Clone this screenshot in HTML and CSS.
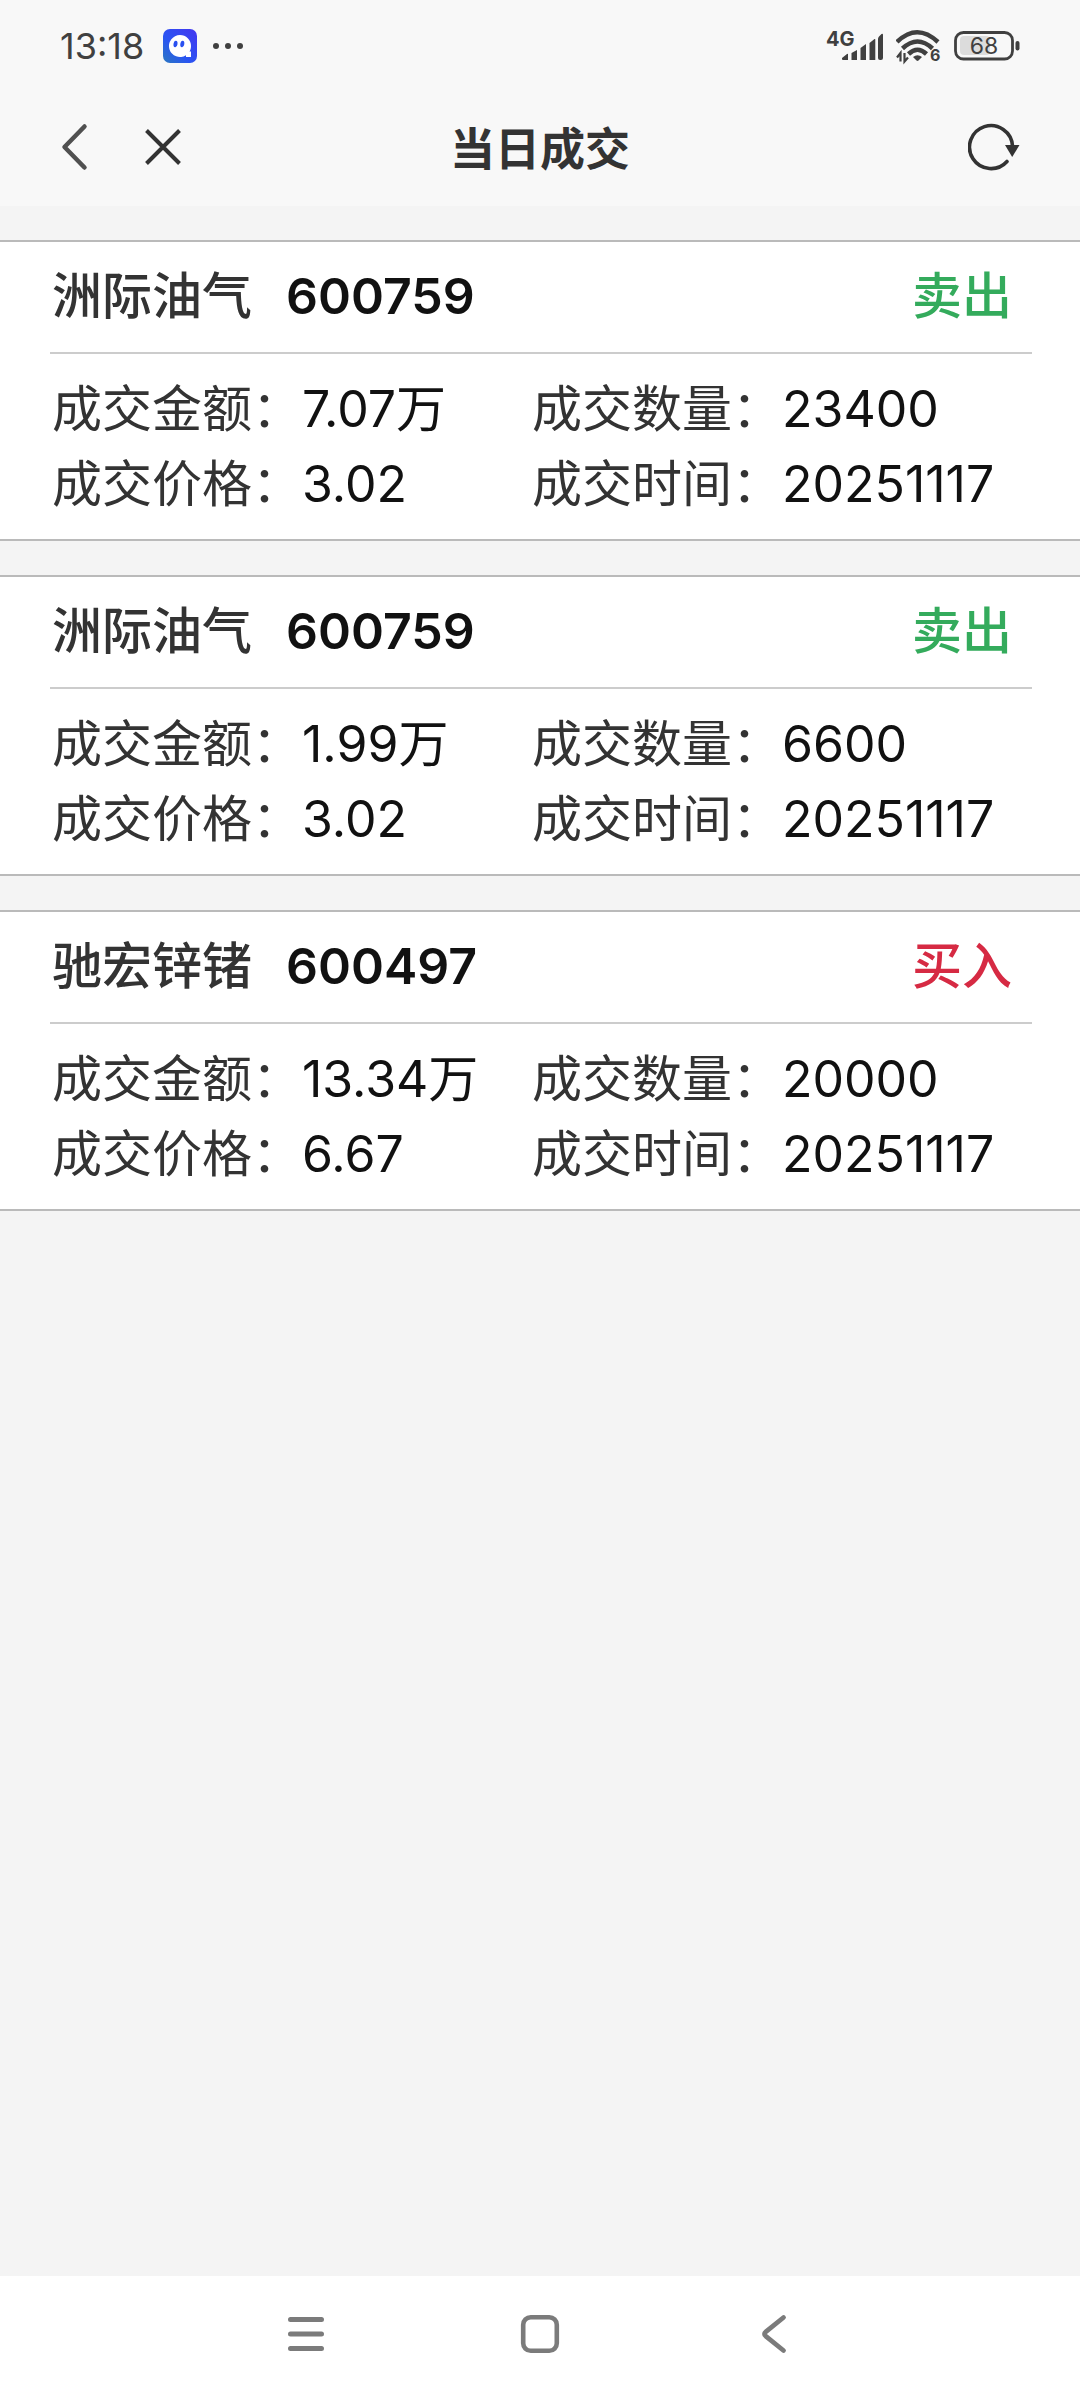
FILE: index.html
```html
<!DOCTYPE html>
<html lang="zh-CN">
<head>
<meta charset="utf-8">
<meta name="viewport" content="width=device-width, initial-scale=1">
<title>当日成交</title>
<link rel="stylesheet" href="styles.css">
</head>
<body>
<div class="status">
  <div class="status-group">
    <span class="clock">13:18</span>
    <svg class="app-icon" width="34" height="34" viewBox="0 0 34 34" aria-hidden="true">
      <defs>
        <linearGradient id="app-bg" x1="0" y1="1" x2="1" y2="0">
          <stop offset="0" stop-color="#2b78c0"/>
          <stop offset=".4" stop-color="#2a55f2"/>
          <stop offset="1" stop-color="#4436f0"/>
        </linearGradient>
      </defs>
      <rect width="34" height="34" rx="7" fill="url(#app-bg)"/>
      <path d="M17 6a11 11 0 0 1 11 11c0 2-.5 4-1.500 5.500H28V28h-5v-1.800A11 11 0 1 1 17 6z" fill="#fff"/>
      <ellipse cx="12.500" cy="15" rx="2" ry="3.200" fill="#2a50f0" transform="rotate(8 12.500 15)"/>
      <ellipse cx="19.300" cy="15" rx="2" ry="3.200" fill="#2a50f0" transform="rotate(8 19.300 15)"/>
    </svg>
    <svg width="30" height="6" viewBox="0 0 30 6" aria-hidden="true" fill="#404040"><circle cx="3" cy="3" r="3"/><circle cx="15" cy="3" r="3"/><circle cx="27" cy="3" r="3"/></svg>
  </div>
  <div class="status-group status-right">
    <svg width="58" height="46" viewBox="0 -6 58 46" aria-label="4G" fill="#404040">
      <text x="0" y="17" class="net">4G</text>
      <path d="M16 29l5-4q1-.6 1 .5V31h-5q-1 0-1-1zM25.500 24l5.500-3v10h-5.500zM34.500 19l5.500-4v16h-5.500zM43.500 14l5-4q.8-.4.800.5V31h-5.800zM52 10q0-1.500 1-2.500l2.500-2.500q1.500-1 1.500 1V29q0 2-2 2h-1q-2 0-2-2z"/>
    </svg>
    <svg width="46" height="46" viewBox="0 -6 46 46" aria-label="Wi-Fi 6" fill="none" stroke="#404040" stroke-width="4.500">
      <path d="M1 13Q21 -6.500 42 13"/>
      <path d="M6.500 19.500Q21.500 5.500 36.500 19.500"/>
      <path d="M12.500 25Q21.500 16.500 30.500 25"/>
      <path d="M17 28q4.500-3.500 9 0L22.500 31.500q-1 .8-2 0z" fill="#404040" stroke="none"/>
      <path d="M4.500 32.500V24L1 28.500M8.500 24v8.500l3.500-4" stroke-width="2.200"/>
      <text x="34" y="32" class="wifi-gen" fill="#404040" stroke="none">6</text>
    </svg>
    <svg width="66" height="30" viewBox="0 0 66 30" aria-label="68%">
      <rect x="6" y="5" width="30" height="19" rx="4" fill="#dcdcdc"/>
      <rect x="1.500" y="1.500" width="57" height="26.500" rx="8" fill="none" stroke="#404040" stroke-width="2.800"/>
      <rect x="61.500" y="10" width="4" height="9.500" rx="2" fill="#404040"/>
      <text x="30" y="23" text-anchor="middle" class="battery">68</text>
    </svg>
  </div>
</div>
<header class="bar">
  <div class="bar-side">
    <button type="button" class="icon-btn" aria-label="返回">
      <svg width="28" height="48" viewBox="0 0 28 48" fill="none" stroke="#505050" stroke-width="4.500" stroke-linecap="round" stroke-linejoin="round"><path d="M24.500 3.500L4.500 24l20 20.500"/></svg>
    </button>
    <button type="button" class="icon-btn" aria-label="关闭">
      <svg width="38" height="38" viewBox="0 0 38 38" fill="none" stroke="#333" stroke-width="4"><path d="M2.500 2.500l33 33M35.500 2.500l-33 33"/></svg>
    </button>
  </div>
  <h1 class="title">当日成交</h1>
  <div class="bar-side bar-end">
    <button type="button" class="icon-btn" aria-label="刷新">
      <svg width="52" height="48" viewBox="0 0 52 48" fill="none"><path d="M39 38.500A21.500 21.500 0 1 1 44.500 23" stroke="#333" stroke-width="3.600" stroke-linecap="round"/><path d="M37 22h14.500L44.200 34z" fill="#333"/></svg>
    </button>
  </div>
</header>
<main class="list">
  <article class="card">
    <div class="card-head"><h2 class="name">洲际油气</h2><span class="code">600759</span><span class="side sell">卖出</span></div>
    <dl class="facts">
      <div class="fact"><dt>成交金额：</dt><dd>7.07万</dd></div>
      <div class="fact"><dt>成交数量：</dt><dd>23400</dd></div>
      <div class="fact"><dt>成交价格：</dt><dd>3.02</dd></div>
      <div class="fact"><dt>成交时间：</dt><dd>20251117</dd></div>
    </dl>
  </article>
  <article class="card">
    <div class="card-head"><h2 class="name">洲际油气</h2><span class="code">600759</span><span class="side sell">卖出</span></div>
    <dl class="facts">
      <div class="fact"><dt>成交金额：</dt><dd>1.99万</dd></div>
      <div class="fact"><dt>成交数量：</dt><dd>6600</dd></div>
      <div class="fact"><dt>成交价格：</dt><dd>3.02</dd></div>
      <div class="fact"><dt>成交时间：</dt><dd>20251117</dd></div>
    </dl>
  </article>
  <article class="card">
    <div class="card-head"><h2 class="name">驰宏锌锗</h2><span class="code">600497</span><span class="side buy">买入</span></div>
    <dl class="facts">
      <div class="fact"><dt>成交金额：</dt><dd>13.34万</dd></div>
      <div class="fact"><dt>成交数量：</dt><dd>20000</dd></div>
      <div class="fact"><dt>成交价格：</dt><dd>6.67</dd></div>
      <div class="fact"><dt>成交时间：</dt><dd>20251117</dd></div>
    </dl>
  </article>
</main>
<nav class="nav" aria-label="系统导航">
  <button type="button" class="icon-btn" aria-label="最近任务">
    <svg width="40" height="40" viewBox="0 0 40 40" stroke="#7b7b7b" stroke-width="5" stroke-linecap="round"><path d="M4.500 5.500h31M4.500 20h31M4.500 34.500h31"/></svg>
  </button>
  <button type="button" class="icon-btn" aria-label="主屏幕">
    <svg width="40" height="40" viewBox="0 0 40 40" fill="none" stroke="#7b7b7b" stroke-width="4.600"><rect x="3.200" y="3.200" width="33.600" height="33.600" rx="7.500"/></svg>
  </button>
  <button type="button" class="icon-btn" aria-label="返回">
    <svg width="40" height="40" viewBox="0 0 40 40" fill="none" stroke="#7b7b7b" stroke-width="4.800" stroke-linecap="round"><path d="M29.500 3.500L12 17.600q-3 2.400 0 4.800L29.500 36.500"/></svg>
  </button>
</nav>
</body>
</html>
```

FILE: styles.css
```css
* {
  box-sizing: border-box;
}

body {
  display: flex;
  flex-direction: column;
  min-height: 100vh;
  margin: 0;
  background: #f4f4f4;
  color: #333;
  font-family: Inter, "Noto Sans CJK SC", sans-serif;
}

h1, h2, dl, dd {
  margin: 0;
}

svg {
  display: block;
}

.icon-btn {
  padding: 0;
  border: 0;
  background: none;
}

/* Status bar */
.status {
  display: flex;
  justify-content: space-between;
  align-items: center;
  height: 92px;
  padding: 0 60px;
  background: #f8f8f8;
}

.status-group {
  display: flex;
  align-items: center;
  gap: 16px;
}

.status-right {
  gap: 12px;
}

.clock {
  width: 87px;
  color: #404040;
  font-size: 36px;
  line-height: 44px;
}

.net {
  font-size: 20px;
  font-weight: 700;
}

.wifi-gen {
  font-size: 16px;
  font-weight: 700;
}

.battery {
  fill: #404040;
  font-size: 23px;
}

/* Title bar */
.bar {
  display: grid;
  grid-template-columns: 1fr auto 1fr;
  align-items: center;
  height: 114px;
  padding: 0 60px 4px;
  background: #f8f8f8;
}

.bar-side {
  display: flex;
  align-items: center;
  gap: 56px;
}

.bar-end {
  justify-content: flex-end;
}

.title {
  padding-top: 6px;
  font-size: 45px;
  line-height: 60px;
  font-weight: 700;
}

/* Trade records */
.list {
  display: flex;
  flex: 1;
  flex-direction: column;
  gap: 34px;
  padding: 34px 0;
}

.card {
  padding: 0 48px 17px 50px;
  border-top: 2px solid #bababa;
  border-bottom: 2px solid #bababa;
  background: #fff;
}

.card-head {
  display: flex;
  align-items: center;
  height: 112px;
  padding: 0 20px 2px 2px;
  border-bottom: 2px solid #ccc;
  font-size: 50px;
  line-height: 75px;
  font-weight: 500;
}

.name {
  font-size: 50px;
  font-weight: 500;
}

.code {
  margin-left: 34px;
  color: #111;
  font-weight: 600;
}

.side {
  margin-left: auto;
}

.sell {
  color: #34ab5c;
}

.buy {
  color: #d62a43;
}

.facts {
  display: grid;
  grid-template-columns: 1fr 1fr;
  padding: 18px 20px 0 2px;
  font-size: 50px;
  line-height: 75px;
}

.fact {
  display: flex;
}

.fact dd {
  color: #111;
}

/* System navigation */
.nav {
  display: flex;
  justify-content: center;
  gap: 194px;
  height: 124px;
  padding-bottom: 8px;
  background: #fff;
}
```
